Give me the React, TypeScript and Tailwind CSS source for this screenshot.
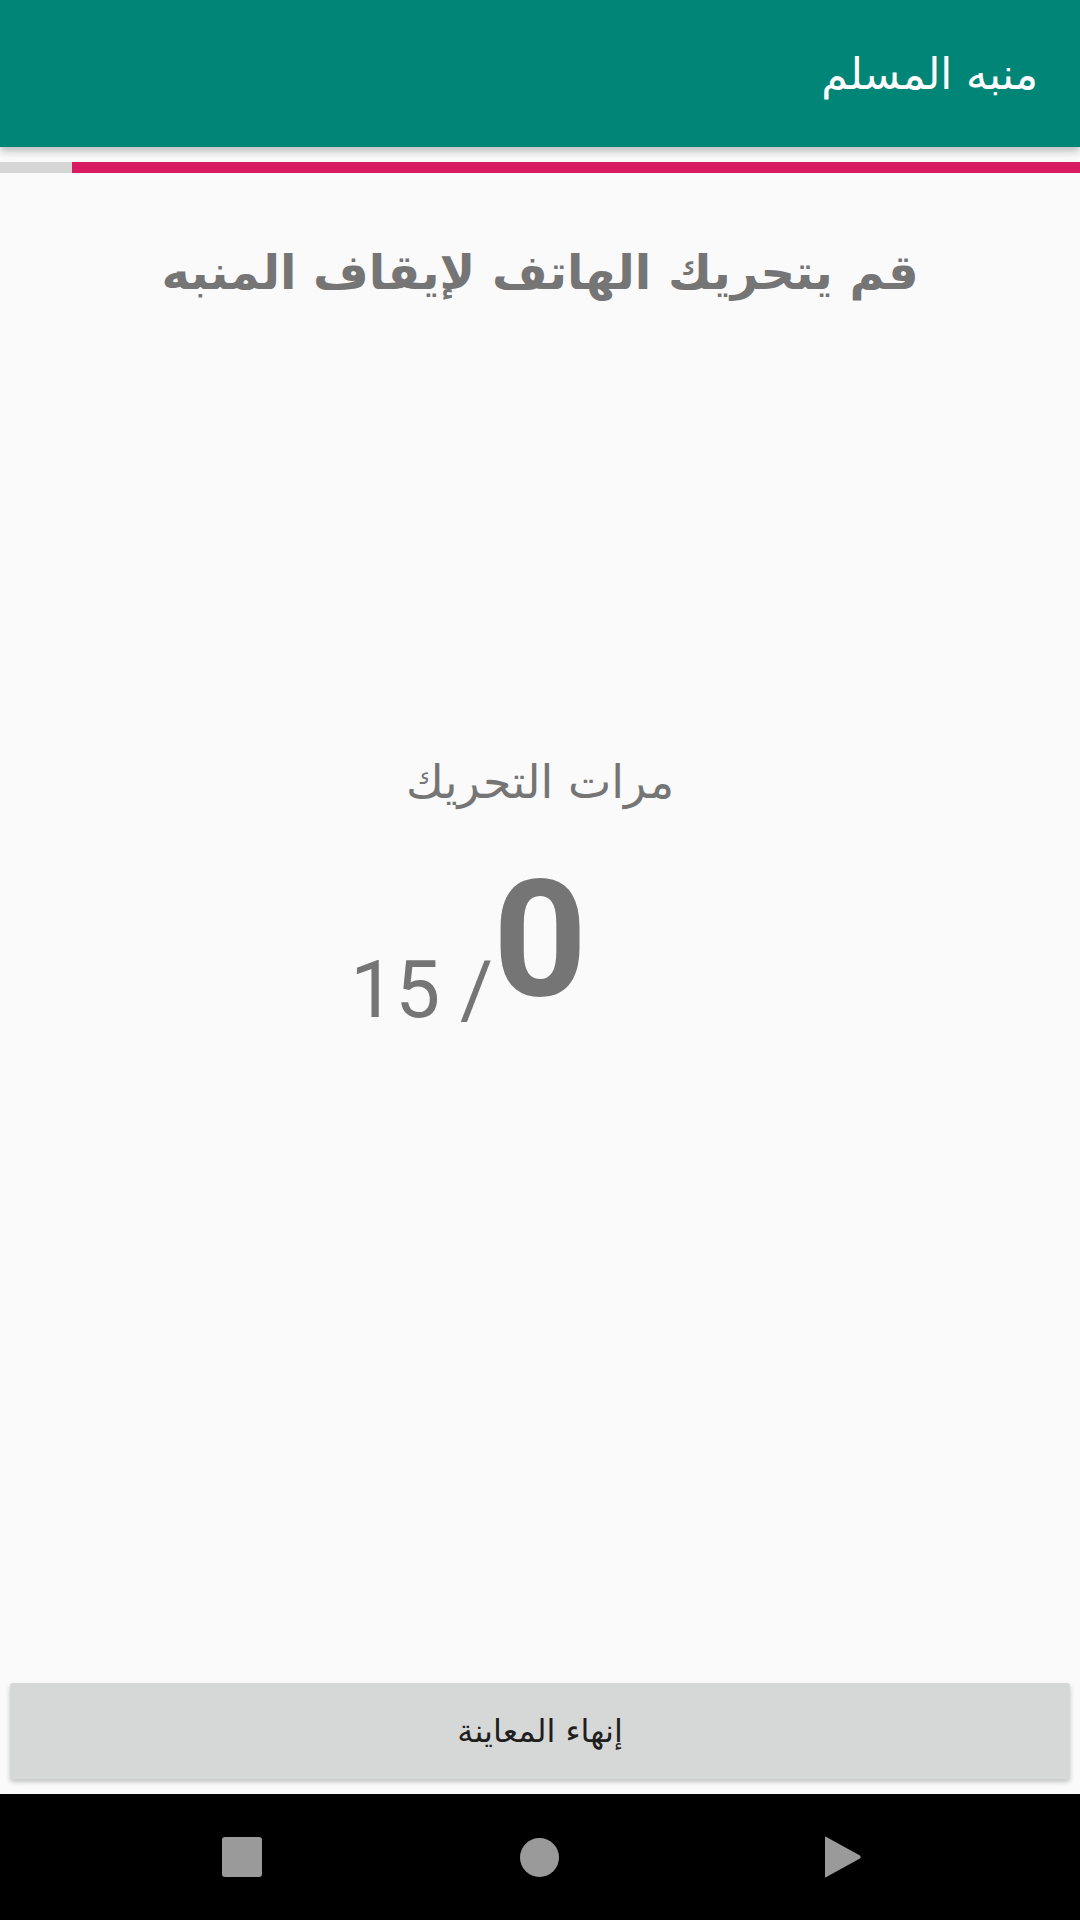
import React from 'react';

const arabic = { fontFamily: '"DejaVu Sans", sans-serif' };

const App: React.FC = () => {
  return (
    <div className="w-[1080px] h-[1920px] flex flex-col bg-[#fafafa] overflow-hidden" dir="rtl">
      {/* App bar */}
      <header className="h-[147px] shrink-0 bg-[#008577] flex items-center px-[42px] pt-[2px] shadow-[0_4px_8px_rgba(0,0,0,0.25)] relative z-10">
        <h1 className="text-white text-[43px] leading-none" style={arabic}>
          منبه المسلم
        </h1>
      </header>

      {/* Progress */}
      <div className="mt-[15px] h-[11px] shrink-0 bg-[#d6d6d6] flex justify-start">
        <div className="h-full w-[1008px] bg-[#d81b60]" />
      </div>

      {/* Content */}
      <main className="flex-1 flex flex-col items-center">
        <h2 className="mt-[68px] text-[48px] font-bold text-[#757575] leading-[1.3]" style={arabic}>
          قم يتحريك الهاتف لإيقاف المنبه
        </h2>

        <p className="mt-[450px] text-[46px] text-[#757575] leading-[1.3]" style={arabic}>
          مرات التحريك
        </p>

        <div className="mt-[44px] w-full grid grid-cols-[1fr_auto_1fr] items-end" dir="ltr">
          <div
            className="flex justify-end text-[80px] text-[#757575] leading-none translate-y-[9px]"
            style={{ fontFamily: 'Roboto, sans-serif' }}
          >
            15 /
          </div>
          <div
            className="text-[164px] font-bold text-[#757575] leading-none"
            style={{ fontFamily: 'Roboto, sans-serif' }}
          >
            0
          </div>
          <div />
        </div>
      </main>

      {/* Button */}
      <div className="px-[10px] pb-[15px] shrink-0">
        <button
          className="w-full h-[96px] bg-[#d6d7d7] rounded-[3px] shadow-[0_3px_5px_rgba(0,0,0,0.22)] text-[#1f1f1f] text-[32px] flex items-center justify-center"
          style={arabic}
        >
          إنهاء المعاينة
        </button>
      </div>

      {/* Navigation bar */}
      <nav className="h-[126px] shrink-0 bg-black flex items-center" dir="ltr">
        <div className="ml-[222px] w-[40px] h-[40px] rounded-[3px] bg-[#9a9a9a]" />
        <div className="ml-[258px] w-[39px] h-[39px] rounded-full bg-[#9a9a9a]" />
        <svg className="ml-[265px]" width="38" height="42" viewBox="0 0 38 42">
          <path d="M1 1.5 Q1 0 2.3 0.9 L36 19.5 Q37.5 21 36 22.5 L2.3 41.1 Q1 42 1 40.5 Z" fill="#9a9a9a" />
        </svg>
      </nav>
    </div>
  );
};

export default App;
